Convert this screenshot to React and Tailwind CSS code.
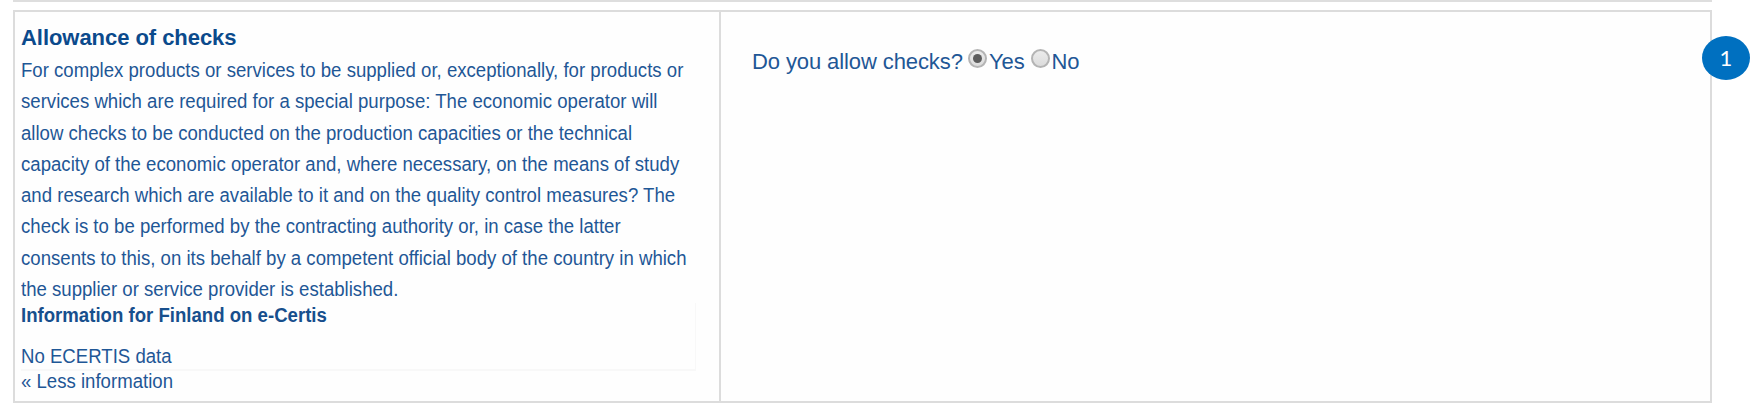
import React from "react";

const LINES = [
  "For complex products or services to be supplied or, exceptionally, for products or",
  "services which are required for a special purpose: The economic operator will",
  "allow checks to be conducted on the production capacities or the technical",
  "capacity of the economic operator and, where necessary, on the means of study",
  "and research which are available to it and on the quality control measures? The",
  "check is to be performed by the contracting authority or, in case the latter",
  "consents to this, on its behalf by a competent official body of the country in which",
  "the supplier or service provider is established.",
];

function Radio({ checked }) {
  return (
    <span
      role="radio"
      aria-checked={checked}
      className="mb-[7px] flex size-[19px] shrink-0 items-center justify-center rounded-full border-2 border-[#b4b4b4] bg-linear-to-b from-[#ebebeb] to-[#dcdcdc]"
    >
      {checked && <span className="size-[9px] rounded-full bg-[#5c5c5c]" />}
    </span>
  );
}

export default function App() {
  return (
    <div className="relative h-[406px] w-[1750px] overflow-hidden bg-white pl-[13px] font-['Liberation_Sans',Arial,sans-serif] text-[#1f5796]">
      <div className="h-[2px] w-[1699px] bg-[#dedede]" />
      <div className="mt-[8px] flex h-[393px] w-[1699px] border-2 border-[#dcdcdc] bg-[#fefefe]">
        <section className="w-[706px] shrink-0 border-r-2 border-[#dcdcdc] pt-[13px] pl-[6px] whitespace-nowrap">
          <h2 className="h-[30px] text-[22px] leading-[26px] font-bold tracking-[-0.05px] text-[#0b4a8c]">
            Allowance of checks
          </h2>
          <div className="h-[248px] origin-left scale-x-93 text-[20px] leading-[31.25px]">
            {LINES.map((line) => (
              <p key={line}>{line}</p>
            ))}
          </div>
          <div className="h-[68px] w-[675px] border-r border-b-2 border-[#f8f8f8] text-[20px]">
            <h3 className="h-[41px] origin-left scale-x-93 leading-[24px] font-bold text-[#174f8d]">
              Information for Finland on e-Certis
            </h3>
            <p className="origin-left scale-x-93 leading-[24px]">No ECERTIS data</p>
          </div>
          <p className="origin-left scale-x-93 text-[20px] leading-[20px]">« Less information</p>
        </section>
        <section className="flex-1 pt-[36px] pl-[31px]">
          <div className="flex h-[28px] items-center text-[22px] leading-[28px] tracking-[-0.1px] whitespace-nowrap">
            <span className="w-[216px]">Do you allow checks?</span>
            <Radio checked />
            <span className="ml-[2px] w-[42px]">Yes</span>
            <Radio checked={false} />
            <span className="ml-[1.5px]">No</span>
          </div>
        </section>
      </div>
      <div className="absolute top-[36px] left-[1702px] flex h-[44px] w-[48px] items-center justify-center rounded-[50%] bg-[#0070c0] pb-px font-[Lato,sans-serif] text-[22px] leading-none text-white">
        1
      </div>
    </div>
  );
}
